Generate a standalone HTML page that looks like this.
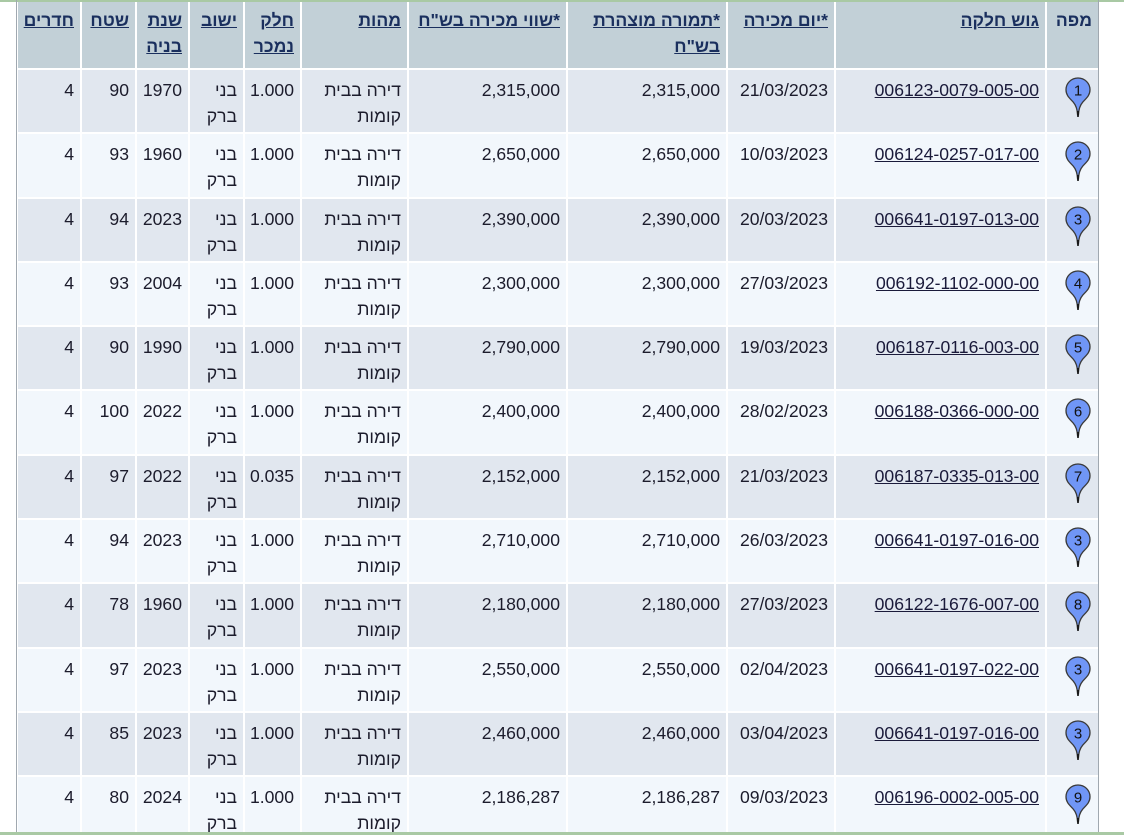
<!DOCTYPE html>
<html><head><meta charset="utf-8"><style>
html,body{margin:0;padding:0;background:#fff;width:1124px;height:835px;overflow:hidden;font-family:"Liberation Sans","Noto Sans CJK SC",sans-serif;}
.top{position:absolute;left:0;top:0;width:1124px;height:2px;background:#a9c9a4;}
.bot{position:absolute;left:0;top:832px;width:1124px;height:3px;background:#a9c9a4;}
.vl{position:absolute;top:0;width:1px;height:835px;background:#a0a8b0;}
.wrap{position:absolute;left:16px;top:0;width:1083px;height:835px;overflow:hidden;}
table{direction:rtl;border-collapse:separate;border-spacing:2px;table-layout:fixed;width:1083px;margin-top:0;font-size:17.6px;color:#1c1c2c;}
td,th{padding:0 6px;vertical-align:top;text-align:right;line-height:26px;}
th{background:#c2d0d7;height:66px;padding-top:5px;padding-bottom:0;box-sizing:border-box;font-weight:bold;color:#1a2f5e;}
th a{color:#1a2f5e;text-decoration:underline;}
td{height:62.3px;box-sizing:border-box;padding-top:7px;}
tr.o td{background:#e1e7ef;}
tr.e td{background:#f2f7fc;}
td a{color:#1a1a3a;text-decoration:underline;}
td.pin{padding:0;text-align:center;}
td.pin svg{display:block;margin:7px auto 0 auto;position:relative;left:5px;}
</style></head><body>
<div class="top"></div>
<div class="wrap">
<table>
<colgroup>
<col style="width:51px"><col style="width:209px"><col style="width:106px"><col style="width:158px"><col style="width:157px"><col style="width:105px"><col style="width:55px"><col style="width:53px"><col style="width:51px"><col style="width:53px"><col style="width:62px">
</colgroup>
<tr><th>מפה</th><th><a>גוש חלקה</a></th><th><a>*יום מכירה</a></th><th><a>*תמורה מוצהרת בש"ח</a></th><th><a>*שווי מכירה בש"ח</a></th><th><a>מהות</a></th><th><a>חלק נמכר</a></th><th><a>ישוב</a></th><th><a>שנת בניה</a></th><th><a>שטח</a></th><th><a>חדרים</a></th></tr>
</table>
</div>
<div class="vl" style="left:16px"></div>
<div class="vl" style="left:1098px"></div>
<div class="bot"></div>
<script>
var d=[["1","006123-0079-005-00","21/03/2023","2,315,000","1.000","1970","90"],
["2","006124-0257-017-00","10/03/2023","2,650,000","1.000","1960","93"],
["3","006641-0197-013-00","20/03/2023","2,390,000","1.000","2023","94"],
["4","006192-1102-000-00","27/03/2023","2,300,000","1.000","2004","93"],
["5","006187-0116-003-00","19/03/2023","2,790,000","1.000","1990","90"],
["6","006188-0366-000-00","28/02/2023","2,400,000","1.000","2022","100"],
["7","006187-0335-013-00","21/03/2023","2,152,000","0.035","2022","97"],
["3","006641-0197-016-00","26/03/2023","2,710,000","1.000","2023","94"],
["8","006122-1676-007-00","27/03/2023","2,180,000","1.000","1960","78"],
["3","006641-0197-022-00","02/04/2023","2,550,000","1.000","2023","97"],
["3","006641-0197-016-00","03/04/2023","2,460,000","1.000","2023","85"],
["9","006196-0002-005-00","09/03/2023","2,186,287","1.000","2024","80"]];
var t=document.querySelector('table');
d.forEach(function(r,i){
var tr=document.createElement('tr');tr.className=i%2?'e':'o';
var pin='<svg width="26" height="48" viewBox="0 0 26 48"><path d="M13 1 C6.3 1 1 6.3 1 12.8 C1 18.5 4.8 21.3 8.4 25.3 C11 28.3 12.3 32 12.6 38 L13.4 38 C13.7 32 15 28.3 17.6 25.3 C21.2 21.3 25 18.5 25 12.8 C25 6.3 19.7 1 13 1 Z" fill="#7096f6" stroke="#3a3a3a" stroke-width="1.3"/><line x1="13" y1="34" x2="13" y2="40" stroke="#111" stroke-width="1.6"/><text x="13" y="18.5" text-anchor="middle" font-family="Liberation Sans,sans-serif" font-size="15" fill="#111">'+r[0]+'</text></svg>';
tr.innerHTML='<td class="pin">'+pin+'</td><td><a>'+r[1]+'</a></td><td>'+r[2]+'</td><td>'+r[3]+'</td><td>'+r[3]+'</td><td>דירה בבית קומות</td><td>'+r[4]+'</td><td>בני ברק</td><td>'+r[5]+'</td><td>'+r[6]+'</td><td>4</td>';
t.appendChild(tr);});
</script>
</body></html>
